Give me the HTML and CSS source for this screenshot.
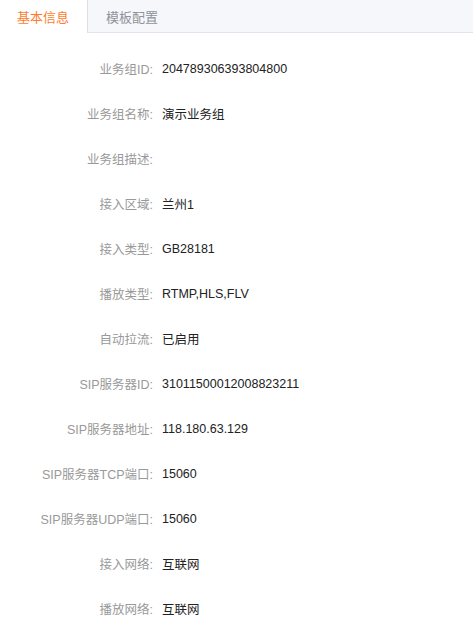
FILE: index.html
```html
<!DOCTYPE html>
<html lang="zh-CN">
<head>
  <meta charset="UTF-8">
  <title>业务组详情</title>
  <link rel="stylesheet" href="styles.css">
</head>
<body>
  <div class="tabs">
    <div class="tab active">基本信息</div>
    <div class="tab">模板配置</div>
  </div>

  <div class="info">
    <div class="label">业务组ID:</div><div class="value">204789306393804800</div>
    <div class="label">业务组名称:</div><div class="value">演示业务组</div>
    <div class="label">业务组描述:</div><div class="value"></div>
    <div class="label">接入区域:</div><div class="value">兰州1</div>
    <div class="label">接入类型:</div><div class="value">GB28181</div>
    <div class="label">播放类型:</div><div class="value">RTMP,HLS,FLV</div>
    <div class="label">自动拉流:</div><div class="value">已启用</div>
    <div class="label">SIP服务器ID:</div><div class="value">31011500012008823211</div>
    <div class="label">SIP服务器地址:</div><div class="value">118.180.63.129</div>
    <div class="label">SIP服务器TCP端口:</div><div class="value">15060</div>
    <div class="label">SIP服务器UDP端口:</div><div class="value">15060</div>
    <div class="label">接入网络:</div><div class="value">互联网</div>
    <div class="label">播放网络:</div><div class="value">互联网</div>
  </div>
</body>
</html>
```

FILE: styles.css
```css
body {
  margin: 0;
  font-family: "Liberation Sans", Arial, "Noto Sans CJK SC", sans-serif;
  background-color: #fff;
}

.tabs {
  display: flex;
  height: 32px;
  background-color: #f5f7fa;
  border-bottom: 1px solid #dfe4ed;
}

.tab {
  display: flex;
  align-items: center;
  padding: 0 19px 0 18px;
  font-size: 13px;
  color: #909399;
  border-left: 1px solid #dcdfe6;
}

.tab.active {
  width: 87px;
  box-sizing: border-box;
  padding: 0 0 0 17px;
  color: #ff7d2e;
  background-color: #fff;
  border-left: none;
  height: 33px;
}

.info {
  display: grid;
  grid-template-columns: 153px 1fr;
  grid-auto-rows: 45px;
  column-gap: 9px;
  padding-top: 13px;
  font-size: 12.5px;
}

.label,
.value {
  display: flex;
  align-items: center;
}

.label {
  justify-content: flex-end;
  color: #999;
}

.value {
  color: #222;
}
```
